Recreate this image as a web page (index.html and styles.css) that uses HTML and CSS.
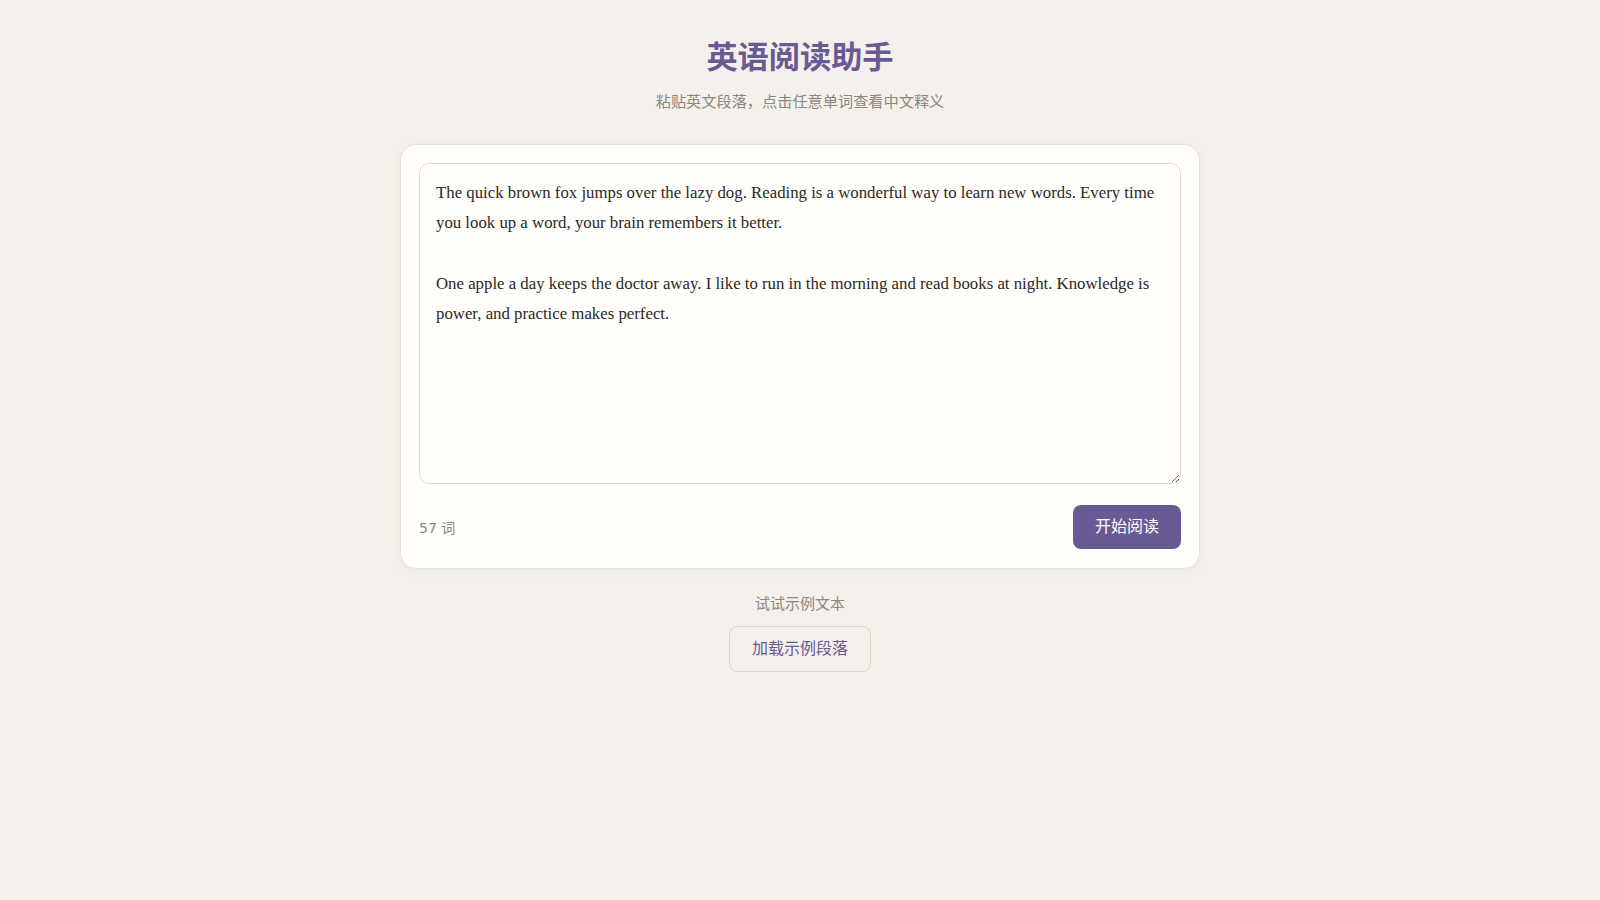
FILE: index.html
```html
<!DOCTYPE html>
<html lang="zh-CN">
<head>
<meta charset="utf-8">
<title>英语阅读助手</title>
<link rel="stylesheet" href="styles.css">
</head>
<body>
<main class="page">
  <header class="header">
    <h1 class="title">英语阅读助手</h1>
    <p class="subtitle">粘贴英文段落，点击任意单词查看中文释义</p>
  </header>
  <section class="card">
    <textarea class="input">The quick brown fox jumps over the lazy dog. Reading is a wonderful way to learn new words. Every time you look up a word, your brain remembers it better.

One apple a day keeps the doctor away. I like to run in the morning and read books at night. Knowledge is power, and practice makes perfect.</textarea>
    <div class="footer">
      <span class="count">57 词</span>
      <button class="primary">开始阅读</button>
    </div>
  </section>
  <section class="sample">
    <p class="sample-label">试试示例文本</p>
    <button class="secondary">加载示例段落</button>
  </section>
</main>
</body>
</html>
```
FILE: styles.css
```css
* { box-sizing: border-box; }
html, body { margin: 0; padding: 0; }
body {
  background: #f4f1ec;
  font-family: "DejaVu Sans", "Noto Sans CJK SC", sans-serif;
  color: #2b2926;
}
.page {
  width: 800px;
  margin: 0 auto;
  padding-top: 37px;
}
.header { text-align: center; }
.title {
  margin: 0;
  font-size: 31.2px;
  line-height: 40px;
  font-weight: 700;
  color: #6a5a94;
}
.subtitle {
  margin: 14px 0 0;
  font-size: 15.2px;
  line-height: 22px;
  color: #8b8680;
}
.card {
  margin-top: 31px;
  background: #fffefa;
  border: 1px solid #e8e3d8;
  border-radius: 16px;
  padding: 18px 18px 19px;
  box-shadow: 0 2px 8px rgba(120, 100, 70, 0.06);
}
.input {
  display: block;
  width: 100%;
  height: 321px;
  padding: 14px 16px;
  border: 1px solid #ddd8cc;
  border-radius: 10px;
  background: #fffefa;
  font-family: "Liberation Serif", "Times New Roman", serif;
  font-size: 16.8px;
  line-height: 30.24px;
  color: #2b2926;
  resize: vertical;
  outline: none;
}
.footer {
  margin-top: 21px;
  display: flex;
  align-items: center;
  justify-content: space-between;
}
.count {
  font-size: 14px;
  color: #8b8680;
}
.primary {
  font-family: inherit;
  font-size: 16px;
  line-height: 24px;
  padding: 10px 22px;
  color: #ffffff;
  background: #6a5a94;
  border: none;
  border-radius: 8px;
}
.sample {
  text-align: center;
  margin-top: 23px;
}
.sample-label {
  margin: 0;
  font-size: 15px;
  line-height: 24px;
  color: #8b8680;
}
.secondary {
  margin-top: 10px;
  font-family: inherit;
  font-size: 16px;
  line-height: 23px;
  padding: 10px 22px 11px;
  color: #6a5a94;
  background: #f4f1ec;
  border: 1px solid #ddd8cc;
  border-radius: 8px;
}
```
